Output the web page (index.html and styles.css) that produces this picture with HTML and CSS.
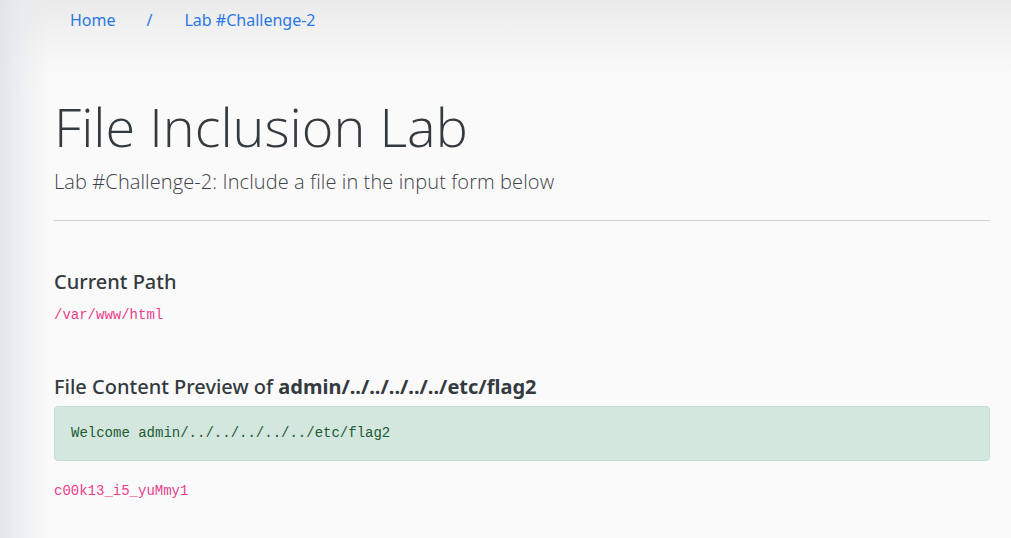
FILE: index.html
```html
<!DOCTYPE html>
<html lang="en">
<head>
<meta charset="utf-8">
<title>File Inclusion Lab</title>
<link rel="stylesheet" href="styles.css">
</head>
<body>
<nav class="crumbs">
  <a class="crumb" href="#">Home</a>
  <span class="sep">/</span>
  <a class="crumb" href="#">Lab #Challenge-2</a>
</nav>
<main class="page">
  <h1 class="title">File Inclusion Lab</h1>
  <p class="lead">Lab #Challenge-2: Include a file in the input form below</p>
  <hr class="rule">
  <h5 class="section">Current Path</h5>
  <code class="mono path">/var/www/html</code>
  <h5 class="section preview-head">File Content Preview of <b>admin/../../../../../etc/flag2</b></h5>
  <div class="alert"><span class="mono">Welcome admin/../../../../../etc/flag2</span></div>
  <code class="mono flag">c00k13_i5_yuMmy1</code>
</main>
</body>
</html>
```
FILE: styles.css
```css
html, body {
  margin: 0;
  padding: 0;
  height: 100%;
}
body {
  font-family: "Noto Sans", "Open Sans", "Liberation Sans", sans-serif;
  color: #343a40;
  background-color: #fafafa;
  background-image:
    linear-gradient(to right, rgba(226,228,236,0.95) 0, rgba(232,234,240,0.7) 20px, rgba(250,250,250,0) 50px),
    linear-gradient(to bottom, #ebebeb 0, #f3f3f3 40px, #f9f9f9 70px, #fafafa 100px);
  overflow: hidden;
}
.crumbs {
  display: flex;
  align-items: center;
  height: 40px;
  padding-left: 70px;
  font-size: 16px;
}
.crumb {
  color: #2a78e4;
  text-decoration: none;
}
.sep {
  color: #2a78e4;
  margin: 0 32px 0 31px;
}
.page {
  padding: 0 21px 0 54px;
}
.title {
  margin: 53px 0 8px;
  font-family: "Open Sans", "Noto Sans", sans-serif;
  font-size: 54px;
  line-height: 66px;
  font-weight: 300;
  color: #343a40;
}
.lead {
  margin: 0;
  font-family: "Open Sans", "Noto Sans", sans-serif;
  font-size: 20px;
  line-height: 30px;
  font-weight: 300;
  letter-spacing: 0.1px;
  color: #3d4349;
}
.rule {
  margin: 23px 0 0;
  border: 0;
  border-top: 1px solid #cfcfcf;
}
.section {
  margin: 49px 0 11px;
  font-size: 20px;
  line-height: 24px;
  font-weight: 500;
  color: #343a40;
}
.mono {
  font-family: "Liberation Mono", "DejaVu Sans Mono", monospace;
  font-size: 14px;
  line-height: 21px;
}
.path, .flag {
  display: block;
  color: #e83e8c;
}
.preview-head {
  margin: 49px 0 7px;
}
.preview-head b {
  font-weight: 700;
}
.alert {
  box-sizing: border-box;
  height: 55px;
  display: flex;
  align-items: center;
  padding: 0 16px;
  background: #d3e7de;
  border: 1px solid #bfdfd0;
  border-radius: 4px;
  color: #1d5a34;
}
.flag {
  margin-top: 20px;
}
```
